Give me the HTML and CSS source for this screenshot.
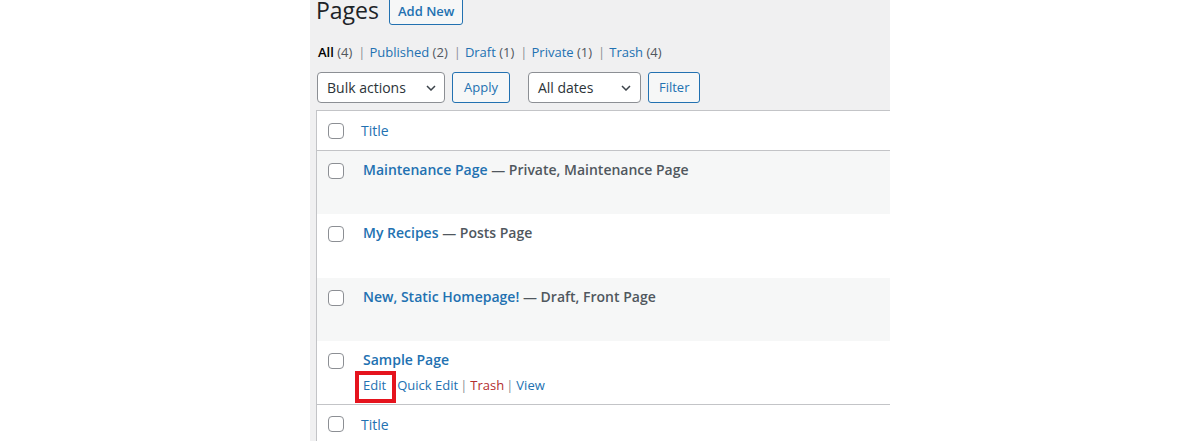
FILE: index.html
```html
<!DOCTYPE html>
<html lang="en">
<head>
<meta charset="utf-8">
<title>Pages</title>
<link rel="stylesheet" href="styles.css">
</head>
<body>
<div class="wrap">
  <div class="page-head">
    <h1 class="page-title">Pages</h1>
    <a class="page-title-action" href="#">Add New</a>
  </div>

  <ul class="subsubsub">
    <li><a class="current" href="#">All <span class="count">(4)</span></a><span class="sep">|</span></li>
    <li><a href="#">Published <span class="count">(2)</span></a><span class="sep">|</span></li>
    <li><a href="#">Draft <span class="count">(1)</span></a><span class="sep">|</span></li>
    <li><a href="#">Private <span class="count">(1)</span></a><span class="sep">|</span></li>
    <li><a href="#">Trash <span class="count">(4)</span></a></li>
  </ul>

  <div class="tablenav">
    <div class="select bulk">
      <span>Bulk actions</span>
      <svg class="chev" width="10" height="6" viewBox="0 0 10 6"><polyline points="1,1 5,5 9,1" fill="none" stroke="#3c434a" stroke-width="1.5"/></svg>
    </div>
    <button class="btn apply">Apply</button>
    <div class="select dates">
      <span>All dates</span>
      <svg class="chev" width="10" height="6" viewBox="0 0 10 6"><polyline points="1,1 5,5 9,1" fill="none" stroke="#3c434a" stroke-width="1.5"/></svg>
    </div>
    <button class="btn filter">Filter</button>
  </div>

  <div class="table">
    <div class="row head">
      <span class="cb"></span>
      <a class="col-title" href="#">Title</a>
    </div>

    <div class="row item alt">
      <span class="cb"></span>
      <div class="cell">
        <div class="title"><a href="#">Maintenance Page</a> <span class="state">— Private, Maintenance Page</span></div>
      </div>
    </div>

    <div class="row item">
      <span class="cb"></span>
      <div class="cell">
        <div class="title"><a href="#">My Recipes</a> <span class="state">— Posts Page</span></div>
      </div>
    </div>

    <div class="row item alt">
      <span class="cb"></span>
      <div class="cell">
        <div class="title"><a href="#">New, Static Homepage!</a> <span class="state">— Draft, Front Page</span></div>
      </div>
    </div>

    <div class="row item">
      <span class="cb"></span>
      <div class="cell">
        <div class="title"><a href="#">Sample Page</a></div>
        <div class="row-actions">
          <a class="edit" href="#">Edit</a><span class="sep first">|</span><a href="#">Quick Edit</a><span class="sep">|</span><a class="trash" href="#">Trash</a><span class="sep">|</span><a href="#">View</a>
        </div>
      </div>
    </div>

    <div class="row foot">
      <span class="cb"></span>
      <a class="col-title" href="#">Title</a>
    </div>
  </div>
</div>
</body>
</html>
```

FILE: styles.css
```css
*, *::before, *::after { box-sizing: border-box; }

html, body {
  margin: 0;
  padding: 0;
  background: #ffffff;
}

body {
  font-family: "Open Sans", "Noto Sans", sans-serif;
  font-size: 13px;
  color: #3c434a;
}

a { text-decoration: none; color: #2271b1; }

.wrap {
  margin-left: 310px;
  width: 580px;
  height: 441px;
  background: #f0f0f1;
  padding-left: 6px;
  overflow: hidden;
}

/* heading */
.page-head {
  display: flex;
  align-items: center;
  gap: 10px;
  height: 27px;
  margin-top: -3px;
}

.page-title {
  margin: 0;
  font-size: 23px;
  font-weight: 400;
  line-height: 27px;
  color: #1d2327;
}

.page-title-action {
  display: inline-block;
  height: 28px;
  margin-top: 1px;
  padding: 0 8px;
  border: 1px solid #2271b1;
  border-radius: 3px;
  background: #f6f7f7;
  font-size: 13px;
  font-weight: 600;
  line-height: 26px;
  color: #2271b1;
}

/* status links */
.subsubsub {
  list-style: none;
  margin: 18px 0 0 2px;
  padding: 0;
  display: flex;
  line-height: 20px;
  font-size: 13px;
  color: #646970;
}

.subsubsub .current {
  color: #000;
  font-weight: 600;
}

.subsubsub .count {
  color: #50575e;
  font-weight: 400;
}

.subsubsub .sep {
  color: #8c8f94;
  margin: 0 4px 0 6px;
}

/* tablenav */
.tablenav {
  display: flex;
  align-items: center;
  margin: 10px 0 0 1px;
  height: 31px;
}

.select {
  height: 31px;
  border: 1px solid #8c8f94;
  border-radius: 4px;
  background: #fff;
  display: flex;
  align-items: center;
  justify-content: space-between;
  font-size: 14px;
  color: #2c3338;
}

.select.bulk { width: 128px; padding: 0 8px 0 9px; }
.select.dates { width: 113px; padding: 0 9px 0 9px; margin-left: 18px; }

.chev { display: block; }

.btn {
  height: 31px;
  margin-left: 7px;
  padding: 0 11px;
  border: 1px solid #2271b1;
  border-radius: 3px;
  background: #f6f7f7;
  color: #2271b1;
  font-family: inherit;
  font-size: 13px;
  line-height: 29px;
}

.btn.filter { padding: 0 10px; }

/* table */
.table {
  margin-top: 7px;
  width: 620px;
  border-top: 1px solid #c3c4c7;
  border-left: 1px solid #c3c4c7;
  background: #fff;
}

.row {
  display: flex;
  background: #fff;
}

.row .cb {
  flex: none;
  width: 16px;
  height: 16px;
  margin: 0 17px 0 11px;
  border: 1px solid #8c8f94;
  border-radius: 4px;
  background: #fff;
}

.row.head {
  height: 40px;
  align-items: center;
  border-bottom: 1px solid #c3c4c7;
}

.row.foot {
  height: 39px;
  align-items: center;
  border-top: 1px solid #c3c4c7;
}

.col-title {
  font-size: 14px;
  line-height: 19px;
}

.row.item {
  height: 63.25px;
  align-items: flex-start;
}

.row.item .cb { margin-top: 12px; }

.row.alt { background: #f6f7f7; }

.cell {
  padding: 9px 0 0 2px;
}

.title {
  font-size: 14px;
  line-height: 20px;
  font-weight: 600;
  color: #50575e;
}

.state { color: #50575e; }

.row-actions {
  margin-top: 5px;
  font-size: 13px;
  line-height: 20px;
  color: #8c8f94;
}

.row-actions .sep { margin: 0 3px 0 2px; }
.row-actions .sep.first { margin: 0 0 0 4px; }

.row-actions .trash { color: #b32d2e; }

.row-actions .edit { position: relative; }

.row-actions .edit::after {
  content: "";
  position: absolute;
  left: -8px;
  top: -5px;
  width: 41px;
  height: 32px;
  border: 4px solid #e5131d;
}
```
